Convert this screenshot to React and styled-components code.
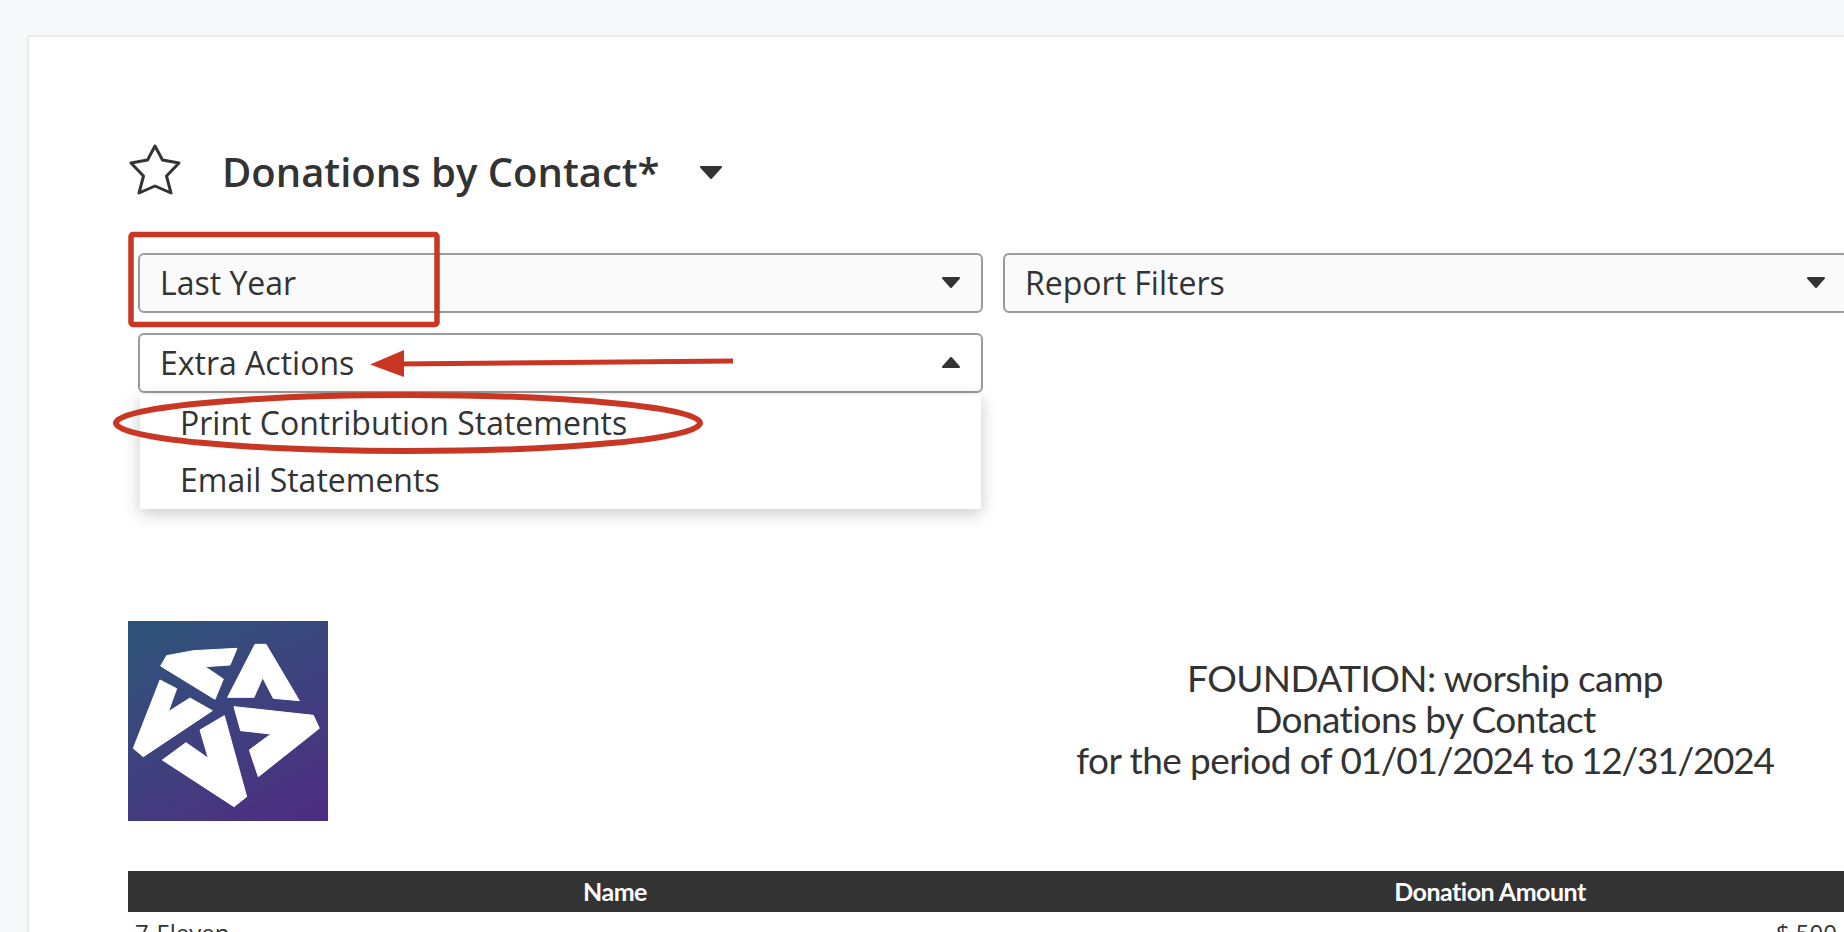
import React from 'react';
import styled, { createGlobalStyle } from 'styled-components';

const GlobalStyle = createGlobalStyle`
  html, body {
    margin: 0;
    padding: 0;
    height: 932px;
    overflow: hidden;
    background: #f7f8fa;
  }
`;

const Page = styled.div`
  position: relative;
  width: 1844px;
  height: 932px;
  overflow: hidden;
  padding: 35px 0 0 27px;
  box-sizing: border-box;
  background: #f7f8fa;
  font-family: "Open Sans", "Noto Sans", sans-serif;
  color: #333;
`;

const Card = styled.main`
  width: 1900px;
  height: 960px;
  box-sizing: border-box;
  padding: 105px 0 0 99px;
  background: #fff;
  border: 2px solid #e9ebed;
  border-radius: 3px;
`;

const TitleRow = styled.div`
  display: flex;
  align-items: center;
  height: 60px;
`;

const StarSvg = styled.svg`
  margin-bottom: 4px;
`;

const Title = styled.h1`
  margin: 0 0 0 40px;
  font-size: 40px;
  font-weight: 600;
  line-height: 60px;
  color: #333;
`;

const TitleCaretSvg = styled.svg`
  margin-left: 39px;
`;

const Filters = styled.div`
  display: grid;
  grid-template-columns: 845px 845px;
  gap: 20px;
  margin: 51px 0 0 10px;
`;

const SelectCell = styled.div`
  position: relative;
`;

const Select = styled.div`
  display: flex;
  align-items: center;
  justify-content: space-between;
  box-sizing: border-box;
  height: 60px;
  padding: 0 20px 2px 20px;
  background: ${p => (p.$open ? '#fff' : '#fafafa')};
  border: 2px solid #9b9b9b;
  border-radius: 6px;
  font-size: 32px;
  color: #333;
`;

const Menu = styled.ul`
  position: absolute;
  top: 62px;
  left: 2px;
  right: 2px;
  margin: 0;
  padding: 0;
  list-style: none;
  background: #fff;
  box-shadow: 0 4px 16px rgba(0, 0, 0, 0.22);
`;

const MenuItem = styled.li`
  height: 57px;
  padding-left: 40px;
  font-size: 32px;
  line-height: 56px;
  color: #333;
`;

const ReportHead = styled.section`
  display: grid;
  grid-template-columns: 844px 906px;
  align-items: center;
  margin-top: 228px;
`;

const ReportTitle = styled.div`
  margin-top: -5px;
  font-family: Lato, "Open Sans", sans-serif;
  font-size: 37px;
  line-height: 41px;
  letter-spacing: -0.58px;
  text-align: center;
  color: #333;
`;

const Dates = styled.span`
  letter-spacing: -1.25px;
`;

const ReportTable = styled.table`
  width: 1750px;
  margin-top: 50px;
  border-collapse: collapse;
  table-layout: fixed;
`;

const NameColumn = styled.col`
  width: 974px;
`;

const HeadCell = styled.th`
  box-sizing: border-box;
  height: 41px;
  padding: 0 0 2px;
  background: #333;
  color: #fff;
  font-family: Lato, "Open Sans", sans-serif;
  font-size: 25px;
  line-height: 30px;
  font-weight: 700;
  letter-spacing: -0.5px;
  text-align: center;
`;

const BodyCell = styled.td`
  padding: 6px ${p => (p.$amount ? '41px' : '7px')} 6px 7px;
  font-size: 24px;
  line-height: 30px;
  text-align: ${p => (p.$amount ? 'right' : 'left')};
  color: #333;
`;

// red markup drawn over the screenshot
const Markup = styled.svg`
  position: absolute;
  top: 0;
  left: 0;
  pointer-events: none;
`;

function StarIcon() {
  return (
    <StarSvg width="54" height="52" viewBox="0 0 54 52" fill="none" stroke="#333" strokeWidth="3" strokeLinejoin="round">
      <path d="M27 2 L34.5 16 L51 19 L38.5 32 L43 49 L27 42 L11 49 L15.5 32 L3 19 L19.5 16 Z" />
    </StarSvg>
  );
}

function Caret({ up }) {
  return (
    <svg width="20" height="13" viewBox="0 0 20 13" fill="#333" stroke="#333" strokeWidth="2" strokeLinejoin="round">
      <polygon points={up ? '10,2 2,11 18,11' : '2,2 18,2 10,11'} />
    </svg>
  );
}

function TitleCaret() {
  return (
    <TitleCaretSvg width="24" height="15" viewBox="0 0 24 15" fill="#333" stroke="#333" strokeWidth="2" strokeLinejoin="round">
      <polygon points="2,2 22,2 12,13" />
    </TitleCaretSvg>
  );
}

function Logo() {
  return (
    <svg width="200" height="200" viewBox="0 0 600 600">
      <defs>
        <linearGradient id="logoBg" x1="0.25" y1="0" x2="0.8" y2="1">
          <stop offset="0" stopColor="#2f527a" />
          <stop offset="1" stopColor="#4d2f82" />
        </linearGradient>
      </defs>
      <rect width="600" height="600" fill="url(#logoBg)" />
      <g fill="#fff" stroke="#fff" strokeWidth="3" strokeLinejoin="round">
        <polygon points="381,70 414,70 514,239 436,232 404,170 378,229 299,229" />
        <polygon points="116,104 196,89 327,82 306,132 231,137 286,174 261,235 98,135" />
        <polygon points="96,177 146,203 121,272 186,231 253,269 46,407 16,382" />
        <polygon points="289,284 356,527 318,557 103,417 174,365 241,412 216,327" />
        <polygon points="318,257 556,283 574,322 391,467 364,387 429,339 338,329" />
      </g>
    </svg>
  );
}

export default function App() {
  return (
    <Page>
      <GlobalStyle />
      <Card>
        <TitleRow>
          <StarIcon />
          <Title>Donations by Contact*</Title>
          <TitleCaret />
        </TitleRow>

        <Filters>
          <SelectCell>
            <Select>Last Year<Caret /></Select>
          </SelectCell>
          <SelectCell>
            <Select>Report Filters<Caret /></Select>
          </SelectCell>
          <SelectCell>
            <Select $open>Extra Actions<Caret up /></Select>
            <Menu>
              <MenuItem>Print Contribution Statements</MenuItem>
              <MenuItem>Email Statements</MenuItem>
            </Menu>
          </SelectCell>
        </Filters>

        <ReportHead>
          <Logo />
          <ReportTitle>
            FOUNDATION: worship camp<br />
            Donations by Contact<br />
            for the period of <Dates>01/01/2024 to 12/31/2024</Dates>
          </ReportTitle>
        </ReportHead>

        <ReportTable>
          <colgroup>
            <NameColumn />
            <col />
          </colgroup>
          <thead>
            <tr>
              <HeadCell>Name</HeadCell>
              <HeadCell>Donation Amount</HeadCell>
            </tr>
          </thead>
          <tbody>
            <tr>
              <BodyCell>7-Eleven</BodyCell>
              <BodyCell $amount>$ 500</BodyCell>
            </tr>
          </tbody>
        </ReportTable>
      </Card>

      <Markup width="1844" height="932" viewBox="0 0 1844 932">
        <rect x="131" y="234.5" width="306" height="90" rx="2" fill="none" stroke="#c93724" strokeWidth="5.5" />
        <path d="M733 361 L395 364" fill="none" stroke="#c93724" strokeWidth="5" />
        <polygon points="370,364.5 404,350 404,377" fill="#c93724" />
        <ellipse cx="408" cy="423" rx="292" ry="28" fill="none" stroke="#c93724" strokeWidth="6" />
      </Markup>
    </Page>
  );
}
